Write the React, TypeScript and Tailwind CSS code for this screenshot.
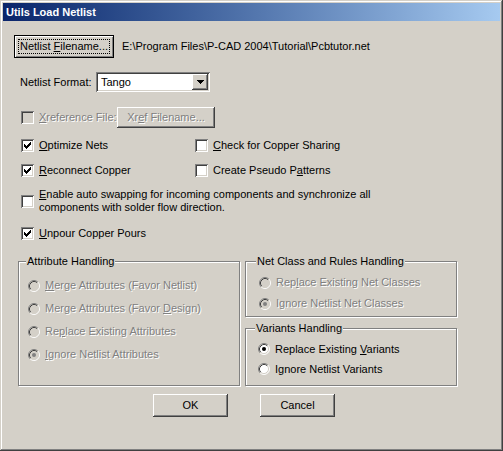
import React from 'react'

const raised =
  'shadow-[inset_-1px_-1px_#404040,inset_1px_1px_#ffffff,inset_-2px_-2px_#808080,inset_2px_2px_#d4d0c8]'
const sunken =
  'shadow-[inset_1px_1px_#808080,inset_-1px_-1px_#ffffff,inset_2px_2px_#404040,inset_-2px_-2px_#d4d0c8]'
const dimText = 'text-[#808080] [text-shadow:1px_1px_0_#ffffff]'

function U({ children }: { children: React.ReactNode }) {
  return <span className="underline underline-offset-[1px]">{children}</span>
}

function Check({ checked, disabled }: { checked?: boolean; disabled?: boolean }) {
  return (
    <div className={`relative w-[13px] h-[13px] shrink-0 ${sunken} ${disabled ? 'bg-[#d4d0c8]' : 'bg-white'}`}>
      {checked && (
        <svg width="13" height="13" viewBox="0 0 13 13" className="absolute left-0 top-0" shapeRendering="crispEdges">
          <rect x="3" y="5" width="1" height="3" fill="#000" />
          <rect x="4" y="6" width="1" height="3" fill="#000" />
          <rect x="5" y="7" width="1" height="3" fill="#000" />
          <rect x="6" y="6" width="1" height="3" fill="#000" />
          <rect x="7" y="5" width="1" height="3" fill="#000" />
          <rect x="8" y="4" width="1" height="3" fill="#000" />
          <rect x="9" y="3" width="1" height="3" fill="#000" />
        </svg>
      )}
    </div>
  )
}

function Radio({ checked, disabled }: { checked?: boolean; disabled?: boolean }) {
  return (
    <svg width="12" height="12" viewBox="0 0 12 12" className="shrink-0">
      <circle cx="6" cy="6" r="5" fill={disabled ? '#d4d0c8' : '#ffffff'} />
      <path d="M2.11 9.89 A5.5 5.5 0 0 1 9.89 2.11" fill="none" stroke="#808080" strokeWidth="1" />
      <path d="M9.89 2.11 A5.5 5.5 0 0 1 2.11 9.89" fill="none" stroke="#ffffff" strokeWidth="1" />
      <path d="M2.82 9.18 A4.5 4.5 0 0 1 9.18 2.82" fill="none" stroke="#404040" strokeWidth="1" />
      <path d="M9.18 2.82 A4.5 4.5 0 0 1 2.82 9.18" fill="none" stroke="#d4d0c8" strokeWidth="1" />
      {checked && <circle cx="6" cy="6" r="2" fill={disabled ? '#808080' : '#000000'} />}
    </svg>
  )
}

function CheckRow({
  label,
  checked,
  disabled,
}: {
  label: React.ReactNode
  checked?: boolean
  disabled?: boolean
}) {
  return (
    <div className="flex items-center h-[17px]">
      <Check checked={checked} disabled={disabled} />
      <span className={`ml-[5px] whitespace-nowrap ${disabled ? dimText : ''}`}>{label}</span>
    </div>
  )
}

function RadioRow({
  label,
  checked,
  disabled,
  h,
}: {
  label: React.ReactNode
  checked?: boolean
  disabled?: boolean
  h: string
}) {
  return (
    <div className={`flex items-center ${h}`}>
      <Radio checked={checked} disabled={disabled} />
      <span className={`ml-[5px] whitespace-nowrap ${disabled ? dimText : ''}`}>{label}</span>
    </div>
  )
}

function Group({
  title,
  className,
  legendLeft,
  children,
}: {
  title: string
  className: string
  legendLeft: string
  children: React.ReactNode
}) {
  return (
    <div
      className={`relative border border-[#808080] shadow-[inset_1px_1px_#ffffff,1px_1px_#ffffff] ${className}`}
    >
      <span className={`absolute top-[-8px] ${legendLeft} bg-[#d4d0c8] px-[1px] leading-[14px] whitespace-nowrap`}>
        {title}
      </span>
      {children}
    </div>
  )
}

export default function App() {
  return (
    <div className="w-[503px] h-[451px] bg-[#d4d0c8] font-['Liberation_Sans',Arial,sans-serif] text-[11px] text-black">
      <div
        className={`w-full h-full p-[3px] flex flex-col shadow-[inset_-1px_-1px_#404040,inset_1px_1px_#d4d0c8,inset_-2px_-2px_#808080,inset_2px_2px_#ffffff]`}
      >
        {/* title bar */}
        <div className="h-[18px] shrink-0 bg-linear-to-r from-[#0a246a] to-[#a6caf0] flex items-center pl-[3px]">
          <span className="text-white font-bold text-[11px] leading-none">Utils Load Netlist</span>
        </div>

        {/* netlist file */}
        <div className="mt-[14px] h-[23px] flex items-center">
          <button className={`ml-[11px] w-[100px] h-[23px] border border-black bg-[#d4d0c8] shadow-[inset_1px_1px_#ffffff,inset_-1px_-1px_#808080] p-[3px]`}>
            <div className="w-full h-full border border-dotted border-black flex items-center justify-center">
              <span className="whitespace-nowrap">
                Netlist <U>F</U>ilename...
              </span>
            </div>
          </button>
          <span className="ml-[8px] whitespace-nowrap">E:\Program Files\P-CAD 2004\Tutorial\Pcbtutor.net</span>
        </div>

        {/* format */}
        <div className="mt-[14px] h-[20px] flex items-center">
          <span className="ml-[17px] w-[76px] whitespace-nowrap">Netlist Format:</span>
          <div className={`w-[114px] h-[20px] bg-white ${sunken} flex items-center p-[2px]`}>
            <span className="flex-1 pl-[3px]">Tango</span>
            <div className={`w-[16px] h-[16px] bg-[#d4d0c8] ${raised} flex items-center justify-center`}>
              <svg width="7" height="4" viewBox="0 0 7 4" shapeRendering="crispEdges">
                <path d="M0 0 H7 V1 H6 V2 H5 V3 H4 V4 H3 V3 H2 V2 H1 V1 H0 Z" fill="#000" />
              </svg>
            </div>
          </div>
        </div>

        {/* xref */}
        <div className="mt-[15px] h-[21px] flex items-center">
          <div className="ml-[18px]">
            <Check disabled />
          </div>
          <span className={`ml-[5px] w-[78px] whitespace-nowrap ${dimText}`}>
            <U>X</U>reference File:
          </span>
          <div className={`w-[98px] h-[21px] ${raised} flex items-center justify-center ${dimText}`}>
            <span className="whitespace-nowrap">
              Xr<U>e</U>f Filename...
            </span>
          </div>
        </div>

        {/* options */}
        <div className="mt-[9px] flex ml-[18px]">
          <div className="w-[174px]">
            <CheckRow checked label={<><U>O</U>ptimize Nets</>} />
          </div>
          <CheckRow label={<><U>C</U>heck for Copper Sharing</>} />
        </div>
        <div className="mt-[8px] flex ml-[18px]">
          <div className="w-[174px]">
            <CheckRow checked label={<><U>R</U>econnect Copper</>} />
          </div>
          <CheckRow label={<>Create Pseudo P<U>a</U>tterns</>} />
        </div>
        <div className="mt-[9px] ml-[18px] flex items-center h-[26px]">
          <Check />
          <span className="ml-[5px] leading-[13px] whitespace-nowrap">
            <U>E</U>nable auto swapping for incoming components and synchronize all
            <br />
            components with solder flow direction.
          </span>
        </div>
        <div className="mt-[11px] ml-[18px]">
          <CheckRow checked label={<><U>U</U>npour Copper Pours</>} />
        </div>

        {/* groups */}
        <div className="mt-[19px] flex ml-[15px]">
          <Group title="Attribute Handling" className="w-[222px] h-[125px] pt-[12px] pl-[9px]" legendLeft="left-[7px]">
            <RadioRow h="h-[23px]" disabled label={<><U>M</U>erge Attributes (Favor Netlist)</>} />
            <RadioRow h="h-[23px]" disabled label={<>Merge Attributes (Favor <U>D</U>esign)</>} />
            <RadioRow h="h-[23px]" disabled label={<>Re<U>p</U>lace Existing Attributes</>} />
            <RadioRow h="h-[23px]" disabled checked label={<><U>I</U>gnore Netlist Attributes</>} />
          </Group>
          <div className="ml-[5px] flex flex-col">
            <Group title="Net Class and Rules Handling" className="w-[212px] h-[56px] pt-[10px] pl-[13px]" legendLeft="left-[10px]">
              <RadioRow h="h-[21px]" disabled label={<>Rep<U>l</U>ace Existing Net Classes</>} />
              <RadioRow h="h-[21px]" disabled checked label={<>I<U>g</U>nore Netlist Net Classes</>} />
            </Group>
            <Group title="Variants Handling" className="mt-[11px] w-[212px] h-[58px] pt-[10px] pl-[12px]" legendLeft="left-[9px]">
              <RadioRow h="h-[20px]" checked label={<>Replace Existing <U>V</U>ariants</>} />
              <RadioRow h="h-[20px]" label="Ignore Netlist Variants" />
            </Group>
          </div>
        </div>

        {/* buttons */}
        <div className="mt-[8px] flex ml-[150px]">
          <button className={`w-[75px] h-[23px] bg-[#d4d0c8] ${raised}`}>OK</button>
          <button className={`ml-[32px] w-[75px] h-[23px] bg-[#d4d0c8] ${raised}`}>Cancel</button>
        </div>
      </div>
    </div>
  )
}
